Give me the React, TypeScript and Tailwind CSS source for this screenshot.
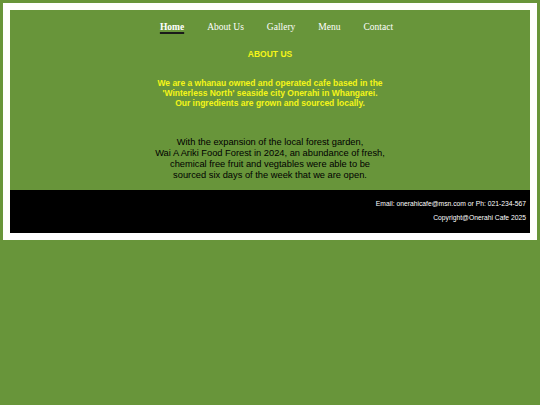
export default function App() {
  const links = ["Home", "About Us", "Gallery", "Menu", "Contact"];

  return (
    <div className="min-h-[405px] bg-[#68953a] p-[3px]">
      <div className="bg-white p-[7px]">
        <div className="bg-[#68953a]">
          <nav className="flex justify-center gap-[23px] pl-[13px] pt-[10px] pb-[14px] font-['Liberation_Serif',serif] text-[9.5px] text-white">
            {links.map((l, i) => (
              <a
                key={l}
                href="#"
                className={
                  i === 0
                    ? "font-bold underline decoration-[#1a1a1a] decoration-[1.5px] underline-offset-2"
                    : ""
                }
              >
                {l}
              </a>
            ))}
          </nav>

          <main className="flex flex-col items-center font-['Liberation_Sans',Arial,sans-serif] text-center">
            <h1 className="text-[8.5px] font-bold leading-[12px] text-[#f5f518]">ABOUT US</h1>
            <p className="mt-[19px] text-[8.5px] font-bold leading-[9.7px] text-[#f5f518]">
              We are a whanau owned and operated cafe based in the
              <br />
              'Winterless North' seaside city Onerahi in Whangarei.
              <br />
              Our ingredients are grown and sourced locally.
            </p>
            <p className="mt-[29px] mb-[9px] text-[9.3px] leading-[11px] text-black">
              With the expansion of the local forest garden,
              <br />
              Wai A Ariki Food Forest in 2024, an abundance of fresh,
              <br />
              chemical free fruit and vegtables were able to be
              <br />
              sourced six days of the week that we are open.
            </p>
          </main>

          <footer className="flex flex-col items-end gap-[6px] bg-black px-[4px] pt-[10px] pb-[11px] font-['Liberation_Sans',Arial,sans-serif] text-[6.75px] leading-[8px] text-white">
            <p>Email: onerahicafe@msn.com or Ph: 021-234-567</p>
            <p>Copyright@Onerahi Cafe 2025</p>
          </footer>
        </div>
      </div>
    </div>
  );
}
